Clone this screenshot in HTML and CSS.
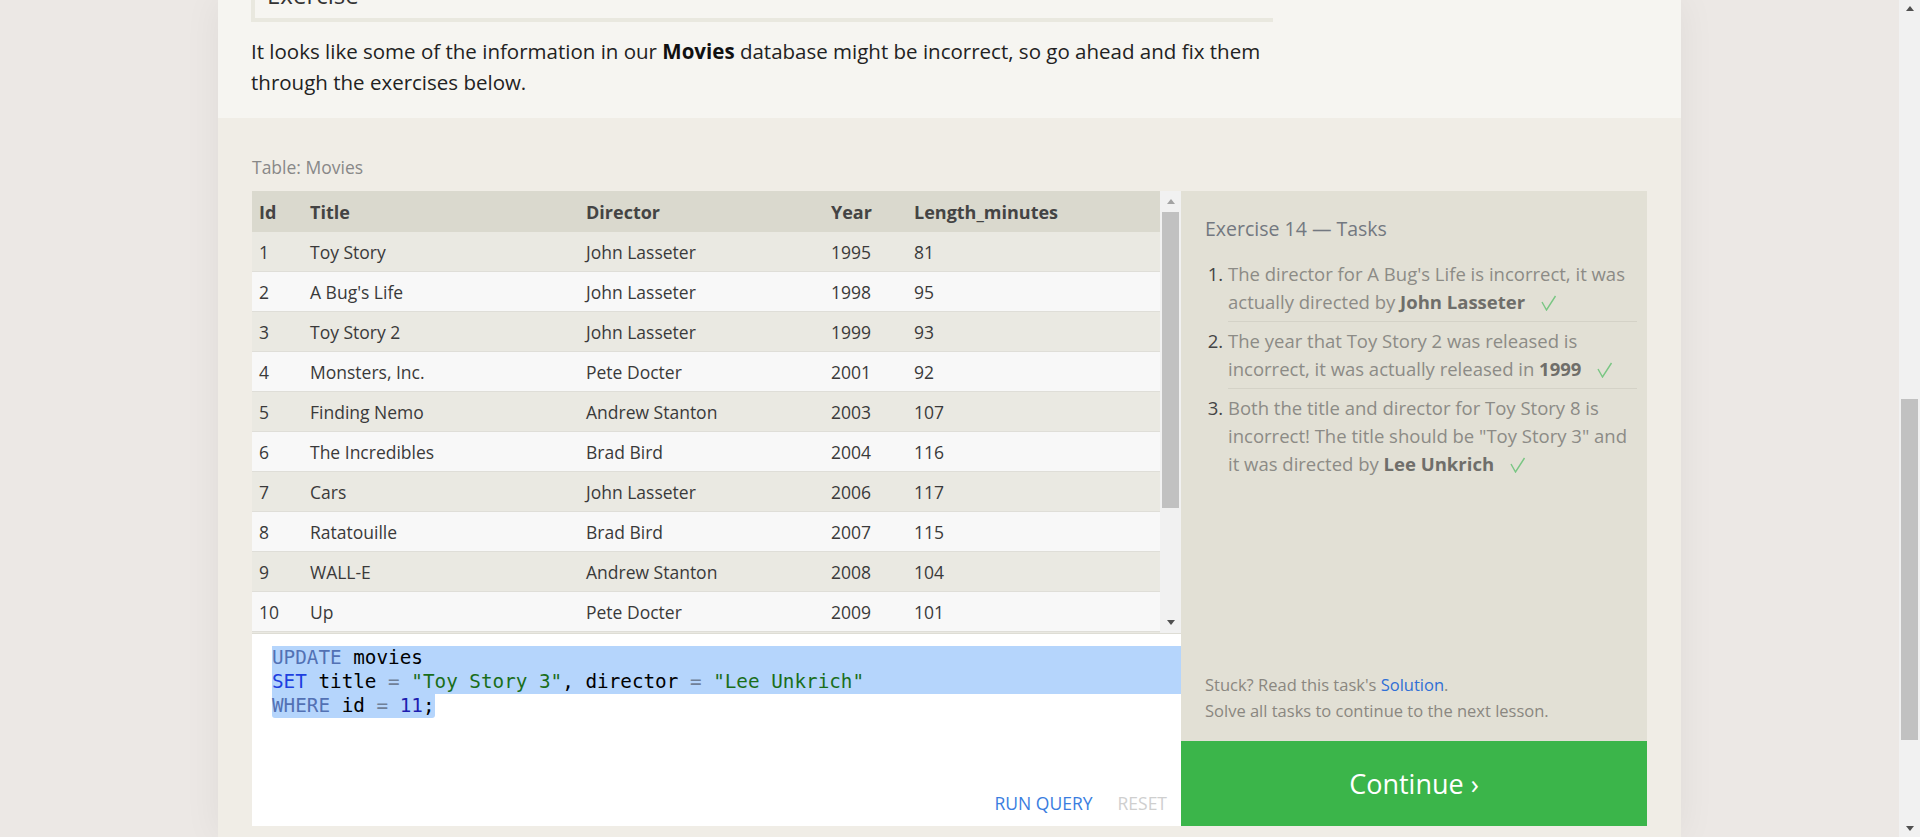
FILE: index.html
```html
<!DOCTYPE html>
<html lang="en">
<head>
<meta charset="utf-8">
<title>SQL Lesson 14 — Updating rows</title>
<link rel="stylesheet" href="styles.css">
</head>
<body>
<div class="viewport">
  <div class="page">
    <section class="lesson">
      <div class="lesson-box">Exercise</div>
      <p class="intro">It looks like some of the information in our <strong>Movies</strong> database might be incorrect, so go ahead and fix them through the exercises below.</p>
    </section>
    <section class="exercise">
      <div class="table-label">Table: Movies</div>
      <div class="workspace">
        <div class="query-col">
          <div class="results">
            <div class="table-view">
              <table>
                <colgroup>
                  <col class="c-id"><col class="c-title"><col class="c-director"><col class="c-year"><col class="c-len">
                </colgroup>
                <thead>
                  <tr><th>Id</th><th>Title</th><th>Director</th><th>Year</th><th>Length_minutes</th></tr>
                </thead>
                <tbody>
                  <tr><td>1</td><td>Toy Story</td><td>John Lasseter</td><td>1995</td><td>81</td></tr>
                  <tr><td>2</td><td>A Bug's Life</td><td>John Lasseter</td><td>1998</td><td>95</td></tr>
                  <tr><td>3</td><td>Toy Story 2</td><td>John Lasseter</td><td>1999</td><td>93</td></tr>
                  <tr><td>4</td><td>Monsters, Inc.</td><td>Pete Docter</td><td>2001</td><td>92</td></tr>
                  <tr><td>5</td><td>Finding Nemo</td><td>Andrew Stanton</td><td>2003</td><td>107</td></tr>
                  <tr><td>6</td><td>The Incredibles</td><td>Brad Bird</td><td>2004</td><td>116</td></tr>
                  <tr><td>7</td><td>Cars</td><td>John Lasseter</td><td>2006</td><td>117</td></tr>
                  <tr><td>8</td><td>Ratatouille</td><td>Brad Bird</td><td>2007</td><td>115</td></tr>
                  <tr><td>9</td><td>WALL-E</td><td>Andrew Stanton</td><td>2008</td><td>104</td></tr>
                  <tr><td>10</td><td>Up</td><td>Pete Docter</td><td>2009</td><td>101</td></tr>
                  <tr><td>11</td><td>Toy Story 3</td><td>Lee Unkrich</td><td>2010</td><td>103</td></tr>
                  <tr><td>12</td><td>Cars 2</td><td>John Lasseter</td><td>2011</td><td>120</td></tr>
                  <tr><td>13</td><td>Brave</td><td>Brenda Chapman</td><td>2012</td><td>102</td></tr>
                  <tr><td>14</td><td>Monsters University</td><td>Dan Scanlon</td><td>2013</td><td>110</td></tr>
                </tbody>
              </table>
            </div>
            <div class="vscroll">
              <div class="sb-arrow"><span class="tri-up tri-disabled"></span></div>
              <div class="sb-thumb"></div>
              <div class="sb-track"></div>
              <div class="sb-arrow"><span class="tri-down"></span></div>
            </div>
          </div>
          <div class="editor">
            <div class="code">
              <div class="code-line sel-full"><span class="kw">UPDATE</span> movies</div>
              <div class="code-line sel-full"><span class="kw2">SET</span> title <span class="op">=</span> <span class="str">"Toy Story 3"</span>, director <span class="op">=</span> <span class="str">"Lee Unkrich"</span></div>
              <div class="code-line"><span class="sel sel-end"><span class="kw">WHERE</span> id <span class="op">=</span> <span class="num">11</span>;</span></div>
            </div>
            <div class="editor-actions">
              <span class="btn-run">RUN QUERY</span>
              <span class="btn-reset">RESET</span>
            </div>
          </div>
        </div>
        <div class="tasks-col">
          <div class="tasks">
            <h3>Exercise 14 — Tasks</h3>
            <ol>
              <li>The director for A Bug's Life is incorrect, it was actually directed by <b>John Lasseter</b><svg class="check" width="16" height="16" viewBox="0 0 16 16"><polyline points="1,7 5.5,15 14.5,1"/></svg></li>
              <li>The year that Toy Story 2 was released is incorrect, it was actually released in <b>1999</b><svg class="check" width="16" height="16" viewBox="0 0 16 16"><polyline points="1,7 5.5,15 14.5,1"/></svg></li>
              <li>Both the title and director for Toy Story 8 is incorrect! The title should be "Toy Story 3" and it was directed by <b>Lee Unkrich</b><svg class="check" width="16" height="16" viewBox="0 0 16 16"><polyline points="1,7 5.5,15 14.5,1"/></svg></li>
            </ol>
            <div class="help">
              <div>Stuck? Read this task's <a href="#">Solution</a>.</div>
              <div>Solve all tasks to continue to the next lesson.</div>
            </div>
          </div>
          <div class="continue">Continue ›</div>
        </div>
      </div>
    </section>
  </div>
</div>
<div class="page-scroll">
  <div class="ps-arrow"><span class="tri-up"></span></div>
  <div class="ps-thumb"></div>
  <div class="ps-arrow ps-bottom"><span class="tri-down"></span></div>
</div>
</body>
</html>
```

FILE: styles.css
```css
* { box-sizing: border-box; }
html, body { margin: 0; height: 100%; }
body {
  background: #ece8e5;
  font-family: "Open Sans", "Noto Sans", sans-serif;
  color: #333;
  overflow: hidden;
  display: flex;
}

.viewport {
  flex: 1;
  height: 837px;
  overflow: hidden;
  display: flex;
  justify-content: center;
}
.page {
  width: 1463px;
  flex-shrink: 0;
  background: #f6f5f1;
  box-shadow: 0 0 36px rgba(0, 0, 0, 0.06);
  display: flex;
  flex-direction: column;
}

/* lesson text */
.lesson { padding: 0 33px 20px; }
.lesson-box {
  margin-top: -30px;
  width: 1022px;
  border-left: 4px solid #e9e8df;
  border-bottom: 4px solid #e9e8df;
  padding: 10px 12px 8px;
  font-size: 24px;
  line-height: 30px;
  color: #333;
}
.intro {
  margin: 14px 0 0;
  width: 1022px;
  font-size: 20.5px;
  line-height: 31px;
  color: #222;
}
.intro strong { font-weight: 700; color: #111; }

/* exercise */
.exercise {
  flex: 1;
  background: #f0ede6;
  padding: 37px 34px 0;
}
.table-label {
  font-size: 17.5px;
  line-height: 24px;
  color: #888;
  margin-bottom: 12px;
}
.workspace { display: flex; height: 635px; }
.query-col { width: 929px; display: flex; flex-direction: column; }

.results {
  height: 443px;
  display: flex;
  border-bottom: 1px solid #deddd5;
}
.table-view { flex: 1; overflow: hidden; }
table {
  width: 908px;
  table-layout: fixed;
  border-collapse: separate;
  border-spacing: 0;
  font-size: 17.5px;
  color: #3a3a3a;
}
.c-id { width: 51px; }
.c-title { width: 276px; }
.c-director { width: 245px; }
.c-year { width: 83px; }
.c-len { width: 253px; }
th {
  background: #dad9ce;
  text-align: left;
  font-weight: 700;
  font-size: 18px;
  line-height: 40px;
  padding: 1px 7px 0;
  color: #444;
}
td {
  line-height: 37px;
  padding: 2px 7px 0;
  border-bottom: 1px solid #dfded8;
  white-space: nowrap;
}
tbody tr:nth-child(odd) td { background: #eae9e2; }
tbody tr:nth-child(even) td { background: #f8f8f8; }

.vscroll {
  width: 21px;
  background: #f1f1f1;
  display: flex;
  flex-direction: column;
  align-items: center;
}
.sb-arrow {
  height: 21px;
  width: 21px;
  display: flex;
  align-items: center;
  justify-content: center;
}
.sb-thumb { width: 17px; height: 296px; background: #c1c1c1; }
.sb-track { flex: 1; }

.tri-up, .tri-down {
  width: 0;
  height: 0;
  border-left: 4px solid transparent;
  border-right: 4px solid transparent;
}
.tri-up { border-bottom: 5px solid #505050; }
.tri-down { border-top: 5px solid #505050; }
.tri-up.tri-disabled { border-bottom-color: #a3a3a3; }

/* editor */
.editor {
  flex: 1;
  background: #fff;
  display: flex;
  flex-direction: column;
  padding: 12px 0 0 20px;
}
.code {
  font-family: "DejaVu Sans Mono", "Liberation Mono", monospace;
  font-size: 19.3px;
  line-height: 24px;
  color: #000;
}
.code-line { height: 24px; white-space: pre; }
.sel-full, .sel { background: #b5d5fc; }
.sel { display: inline-block; height: 24px; }
.sel-end { border-radius: 0 0 3px 3px; }
.kw { color: #5271b4; }
.kw2 { color: #1d3fe0; }
.op { color: #6f8098; }
.str { color: #1a6e1a; }
.num { color: #1d1db0; }

.editor-actions {
  margin-top: auto;
  display: flex;
  justify-content: flex-end;
  gap: 25px;
  padding: 0 14px 11px 0;
  font-size: 17.5px;
  line-height: 24px;
}
.btn-run { color: #3a7de0; }
.btn-reset { color: #cfcfcf; }

/* tasks */
.tasks-col { flex: 1; display: flex; flex-direction: column; }
.tasks {
  flex: 1;
  background: #e2e0d5;
  padding: 25px 10px 17px 24px;
  display: flex;
  flex-direction: column;
}
.tasks h3 {
  margin: 0 0 13px;
  font-weight: 400;
  font-size: 19.5px;
  line-height: 26px;
  color: #737880;
}
.tasks ol { margin: 0; padding-left: 23px; }
.tasks li {
  padding: 5px 0;
  border-bottom: 1px solid #d4d2c7;
  font-size: 18.5px;
  line-height: 28px;
  color: #8c8b86;
}
.tasks li:last-child { border-bottom: 0; }
.tasks li::marker { color: #444; }
.tasks li b { color: #6f6e6a; }
.check {
  margin-left: 16px;
  vertical-align: -2px;
  fill: none;
  stroke: #79c683;
  stroke-width: 1.4;
}
.help {
  margin-top: auto;
  font-size: 16.5px;
  line-height: 26px;
  color: #8a8780;
}
.help a { color: #2f6fd6; text-decoration: none; }
.continue {
  height: 85px;
  background: #3bb54a;
  color: #fff;
  font-size: 27px;
  display: flex;
  align-items: center;
  justify-content: center;
}

/* page scrollbar */
.page-scroll {
  width: 21px;
  height: 837px;
  flex-shrink: 0;
  background: #f1f1f1;
  display: flex;
  flex-direction: column;
  align-items: center;
}
.ps-arrow {
  height: 17px;
  width: 21px;
  display: flex;
  align-items: center;
  justify-content: center;
}
.ps-thumb { width: 17px; height: 341px; margin-top: 382px; background: #c1c1c1; }
.ps-bottom { margin-top: auto; }
```
